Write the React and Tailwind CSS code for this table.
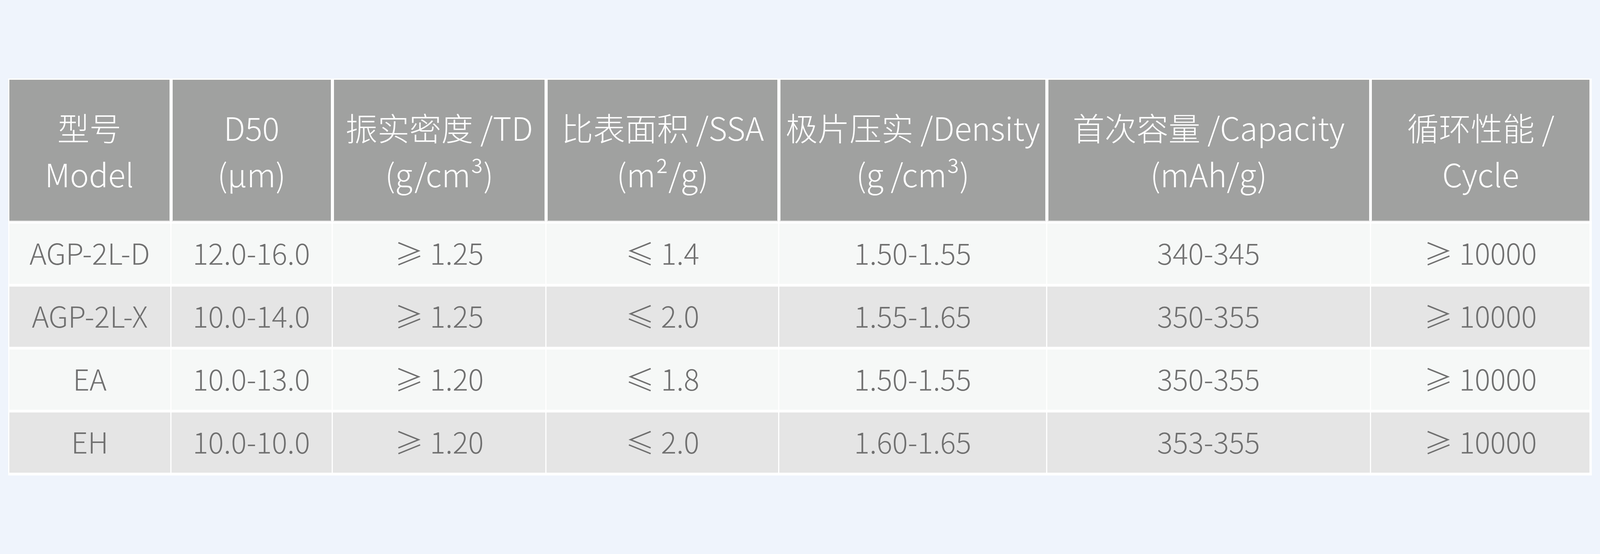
import React from "react";

const headers = [
  ["型号", "Model"],
  ["D50", "(μm)"],
  ["振实密度 /TD", "(g/cm³)"],
  ["比表面积 /SSA", "(m²/g)"],
  ["极片压实 /Density", "(g /cm³)"],
  ["首次容量 /Capacity", "(mAh/g)"],
  ["循环性能 /", "Cycle"],
];

const rows = [
  ["AGP-2L-D", "12.0-16.0", "≥ 1.25", "≤ 1.4", "1.50-1.55", "340-345", "≥ 10000"],
  ["AGP-2L-X", "10.0-14.0", "≥ 1.25", "≤ 2.0", "1.55-1.65", "350-355", "≥ 10000"],
  ["EA", "10.0-13.0", "≥ 1.20", "≤ 1.8", "1.50-1.55", "350-355", "≥ 10000"],
  ["EH", "10.0-10.0", "≥ 1.20", "≤ 2.0", "1.60-1.65", "353-355", "≥ 10000"],
];

const gridCols =
  "grid grid-cols-[500fr_498fr_662fr_720fr_829fr_1004fr_679fr] gap-x-[3px]";

export default function App() {
  return (
    <div className="w-full h-[1417px] bg-[#eff4fc] pt-[201px] px-[21px] font-['Noto_Sans_CJK_SC','Noto_Sans',sans-serif] font-light">
      <div className="w-full bg-white pt-[3px] pl-[3px] pr-[6px] pb-[7px]">
        <div className={`${gridCols} mb-[6px]`}>
          {headers.map((h, i) => (
            <div
              key={i}
              className={
                "h-[362px] min-w-0 bg-[#a0a1a0] border-b-2 border-b-[#d4d4d4] flex flex-col items-center justify-center text-white text-[1.996vw] leading-[119px] whitespace-nowrap " +
                (i === 0
                  ? "border-r-[2px] border-r-white"
                  : i === 6
                  ? "border-l-[2px] border-l-white"
                  : "border-l-[3px] border-l-white border-r-[2px] border-r-white")
              }
            >
              <div>{h[0]}</div>
              <div>{h[1]}</div>
            </div>
          ))}
        </div>
        <div className="flex flex-col gap-y-[7px]">
          {rows.map((r, ri) => (
            <div key={ri} className={gridCols}>
              {r.map((c, ci) => (
                <div
                  key={ci}
                  className={
                    "h-[154px] min-w-0 pb-[8px] flex items-center justify-center text-[1.814vw] leading-none text-[#707070] whitespace-nowrap " +
                    (ri % 2 === 0 ? "bg-[#f6f8f7]" : "bg-[#e5e5e5]")
                  }
                >
                  {c}
                </div>
              ))}
            </div>
          ))}
        </div>
      </div>
    </div>
  );
}
